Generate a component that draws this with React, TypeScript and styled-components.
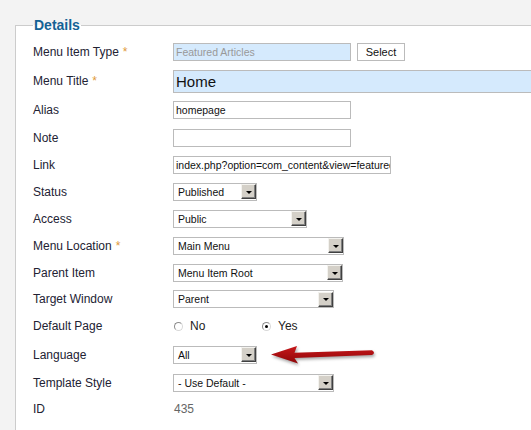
import React from 'react';
import styled, {createGlobalStyle} from 'styled-components';

const GlobalStyle = createGlobalStyle`
    html, body {
        margin: 0;
        padding: 0;
        background-color: #f3f3f3;
        overflow: hidden;
    }

    body {
        font-family: "Liberation Sans", Arial, sans-serif;
        font-size: 12px;
        color: #222;
    }
`;

const Page = styled.div`
    width: 531px;
    height: 430px;
    padding: 17px 0 0 15px;
    box-sizing: border-box;
    overflow: hidden;
`;

const Fieldset = styled.fieldset`
    width: 620px;
    height: 500px;
    margin: 0;
    padding: 4px 0 0 17px;
    box-sizing: border-box;
    border: 1px solid #cccccc;
    background-color: #ffffff;
`;

const Legend = styled.legend`
    padding: 0 1px;
    margin: 0;
    font-size: 14px;
    line-height: 16px;
    font-weight: bold;
    color: #146295;
`;

const Row = styled.div<{$h?: number}>`
    position: relative;
    display: flex;
    align-items: center;
    height: ${(p) => p.$h ?? 27}px;
`;

const Label = styled.div`
    width: 140px;
    flex-shrink: 0;
    font-size: 12px;
    color: #222233;
`;

const Star = styled.span`
    color: #e09a3a;
    margin-left: 4px;
`;

const TextInput = styled.div<{$w: number; $tall?: boolean; $blue?: boolean; $muted?: boolean}>`
    width: ${(p) => p.$w}px;
    height: ${(p) => (p.$tall ? 23 : 18)}px;
    box-sizing: border-box;
    border: 1px solid #bbbbbb;
    background-color: ${(p) => (p.$blue ? '#d5eafd' : '#ffffff')};
    color: ${(p) => (p.$muted ? '#999999' : '#111111')};
    font-size: ${(p) => (p.$tall ? 15 : 10.5)}px;
    line-height: ${(p) => (p.$tall ? 21 : 16)}px;
    padding-left: 2px;
    white-space: nowrap;
    overflow: hidden;
    flex-shrink: 0;
`;

const Button = styled.div`
    width: 48px;
    height: 18px;
    margin-left: 6px;
    box-sizing: border-box;
    border: 1px solid #bbbbbb;
    background-color: #ffffff;
    font-size: 11px;
    line-height: 16px;
    text-align: center;
    color: #111;
`;

const Select = styled.div<{$w: number}>`
    width: ${(p) => p.$w}px;
    height: 18px;
    box-sizing: border-box;
    border: 1px solid #bbbbbb;
    background-color: #ffffff;
    display: flex;
    align-items: center;
    justify-content: space-between;
    padding: 0 0 0 4px;
    font-size: 10.5px;
    color: #111;
    flex-shrink: 0;
`;

const DropButton = styled.div`
    width: 15px;
    height: 15px;
    box-sizing: border-box;
    background-color: #d4d0c8;
    border-top: 1px solid #f4f3ef;
    border-left: 1px solid #f4f3ef;
    border-right: 1px solid #404040;
    border-bottom: 1px solid #404040;
    box-shadow: inset -1px -1px 0 #808080;
    display: flex;
    align-items: center;
    justify-content: center;

    &::after {
        content: '';
        border-left: 3px solid transparent;
        border-right: 3px solid transparent;
        border-top: 3px solid #000;
        margin-top: 1px;
    }
`;

const RadioGroup = styled.div`
    display: flex;
    align-items: center;
`;

const RadioOption = styled.label`
    width: 88px;
    display: flex;
    align-items: center;
    font-size: 12px;
    color: #222;
`;

const RadioDot = styled.span<{$on?: boolean}>`
    width: 9px;
    height: 9px;
    box-sizing: border-box;
    border-radius: 50%;
    border: 1px solid #8c8c8c;
    border-right-color: #d8d8d8;
    border-bottom-color: #d8d8d8;
    background-color: #fff;
    margin: 0 7px 0 1px;
    display: flex;
    align-items: center;
    justify-content: center;

    &::after {
        content: '';
        width: 3px;
        height: 3px;
        border-radius: 50%;
        background-color: ${(p) => (p.$on ? '#000' : 'transparent')};
    }
`;

const Value = styled.div`
    color: #666;
    font-size: 12px;
    padding-left: 1px;
`;

// red pointer laid over the form, next to the Language select
const ArrowSvg = styled.svg`
    position: absolute;
    left: 235px;
    top: 0px;
    width: 112px;
    height: 28px;
    filter: drop-shadow(1px 2px 1.5px rgba(0, 0, 0, 0.35));
`;

const PointerArrow = () => (
    <ArrowSvg viewBox="0 0 112 28">
        <defs>
            <linearGradient id="arrowFill" x1="0" y1="0" x2="0" y2="1">
                <stop offset="0" stopColor="#c8181b" />
                <stop offset="1" stopColor="#8e0608" />
            </linearGradient>
        </defs>
        <path
            d="M3,14.5 L29,6 L26.5,12.8 L104,10.3 Q108,12.6 104,15 L26.5,18 L30,23.5 Z"
            fill="url(#arrowFill)"
        />
    </ArrowSvg>
);

const SelectBox = ({w, text}: {w: number; text: string}) => (
    <Select $w={w}>
        <span>{text}</span>
        <DropButton />
    </Select>
);

const App = () => {
    return (
        <>
            <GlobalStyle />
            <Page>
                <Fieldset>
                    <Legend>Details</Legend>
                    <Row $h={29}>
                        <Label>
                            Menu Item Type<Star>*</Star>
                        </Label>
                        <TextInput $w={178} $blue $muted>
                            Featured Articles
                        </TextInput>
                        <Button>Select</Button>
                    </Row>
                    <Row $h={30}>
                        <Label>
                            Menu Title<Star>*</Star>
                        </Label>
                        <TextInput $w={420} $tall $blue>
                            Home
                        </TextInput>
                    </Row>
                    <Row $h={28}>
                        <Label>Alias</Label>
                        <TextInput $w={178}>homepage</TextInput>
                    </Row>
                    <Row>
                        <Label>Note</Label>
                        <TextInput $w={178} />
                    </Row>
                    <Row>
                        <Label>Link</Label>
                        <TextInput $w={218}>index.php?option=com_content&amp;view=featured</TextInput>
                    </Row>
                    <Row>
                        <Label>Status</Label>
                        <SelectBox w={84} text="Published" />
                    </Row>
                    <Row>
                        <Label>Access</Label>
                        <SelectBox w={134} text="Public" />
                    </Row>
                    <Row>
                        <Label>
                            Menu Location<Star>*</Star>
                        </Label>
                        <SelectBox w={171} text="Main Menu" />
                    </Row>
                    <Row>
                        <Label>Parent Item</Label>
                        <SelectBox w={170} text="Menu Item Root" />
                    </Row>
                    <Row $h={26}>
                        <Label>Target Window</Label>
                        <SelectBox w={161} text="Parent" />
                    </Row>
                    <Row $h={28}>
                        <Label>Default Page</Label>
                        <RadioGroup>
                            <RadioOption>
                                <RadioDot />
                                No
                            </RadioOption>
                            <RadioOption>
                                <RadioDot $on />
                                Yes
                            </RadioOption>
                        </RadioGroup>
                    </Row>
                    <Row $h={29}>
                        <Label>Language</Label>
                        <SelectBox w={84} text="All" />
                        <PointerArrow />
                    </Row>
                    <Row>
                        <Label>Template Style</Label>
                        <SelectBox w={161} text="- Use Default -" />
                    </Row>
                    <Row $h={26}>
                        <Label>ID</Label>
                        <Value>435</Value>
                    </Row>
                </Fieldset>
            </Page>
        </>
    );
};

export default App;
